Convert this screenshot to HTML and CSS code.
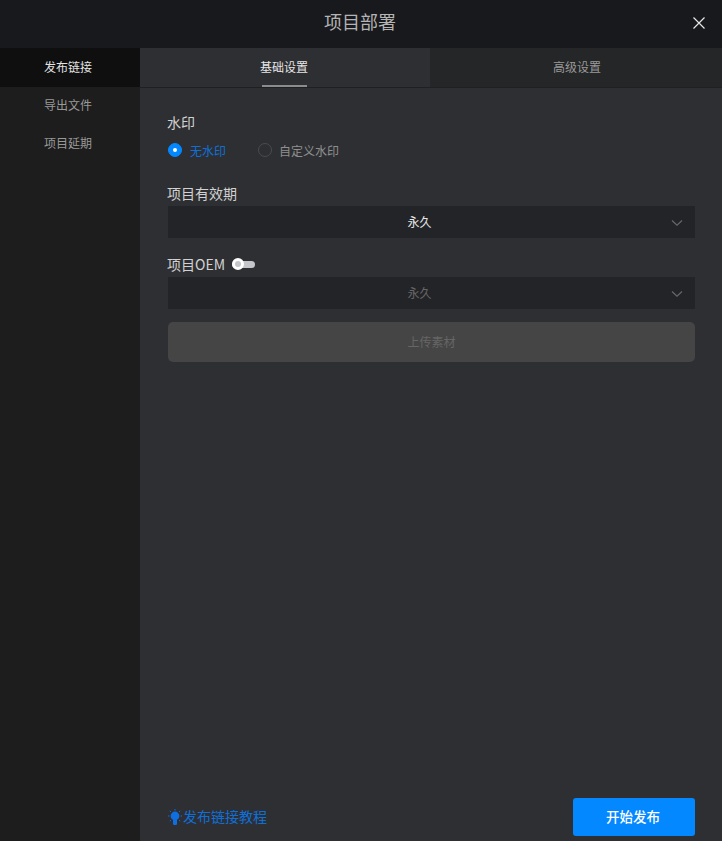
FILE: index.html
```html
<!DOCTYPE html>
<html lang="zh">
<head>
<meta charset="utf-8">
<title>项目部署</title>
<link rel="stylesheet" href="styles.css">
</head>
<body>
<div class="dialog">
  <header class="head">
    <h1 class="title">项目部署</h1>
    <button class="close" aria-label="关闭">
      <svg width="14" height="14" viewBox="0 0 14 14"><path d="M1.5 1.5 L12.5 12.5 M12.5 1.5 L1.5 12.5" stroke="#e6e6e6" stroke-width="1.2" fill="none"/></svg>
    </button>
  </header>
  <div class="body">
    <nav class="side">
      <a class="side-item active">发布链接</a>
      <a class="side-item">导出文件</a>
      <a class="side-item">项目延期</a>
    </nav>
    <main class="main">
      <div class="tabs">
        <div class="tab active"><span class="tab-label">基础设置</span></div>
        <div class="tab"><span class="tab-label">高级设置</span></div>
      </div>
      <div class="form">
        <div class="label label-first">水印</div>
        <div class="radios">
          <label class="radio on"><i class="dot"></i>无水印</label>
          <label class="radio"><i class="dot"></i>自定义水印</label>
        </div>
        <div class="label label-valid">项目有效期</div>
        <div class="select">
          <span>永久</span>
          <svg class="chev" width="12" height="8" viewBox="0 0 12 8"><path d="M1 1.5 L6 6.2 L11 1.5" stroke="#66686c" stroke-width="1.2" fill="none"/></svg>
        </div>
        <div class="label label-oem">项目OEM
          <span class="switch"><i class="knob"></i></span>
        </div>
        <div class="select disabled">
          <span>永久</span>
          <svg class="chev" width="12" height="8" viewBox="0 0 12 8"><path d="M1 1.5 L6 6.2 L11 1.5" stroke="#66686c" stroke-width="1.2" fill="none"/></svg>
        </div>
        <div class="upload">上传素材</div>
      </div>
      <footer class="foot">
        <a class="help">
          <svg width="14" height="17" viewBox="0 0 14 17"><circle cx="7" cy="7" r="4.4" fill="#0f6fe0"/><rect x="5" y="10" width="4" height="6" rx="1.2" fill="#0f6fe0"/><path d="M7 0v1.5M0 7h1.4M12.6 7H14M1.8 1.8l1.1 1.1M12.2 1.8l-1.1 1.1M1.8 12.2l1.1-1.1M12.2 12.2l-1.1-1.1" stroke="#0f6fe0" stroke-width="1" fill="none"/></svg>发布链接教程</a>
        <button class="publish">开始发布</button>
      </footer>
    </main>
  </div>
</div>
</body>
</html>
```

FILE: styles.css
```css
* { box-sizing: border-box; }
html, body { margin: 0; padding: 0; height: 100%; }
body {
  background: #2e2f33;
  font-family: "Noto Sans CJK SC", "Liberation Sans", sans-serif;
  overflow: hidden;
}
.dialog { width: 722px; height: 841px; display: flex; flex-direction: column; }
.head {
  height: 48px;
  flex: none;
  background: #18191d;
  display: flex;
  align-items: center;
  justify-content: center;
  position: relative;
}
.title { margin: 0 2px 0 0; font-size: 18px; font-weight: 400; color: #b4b4b4; line-height: 48px; transform: translateY(-3px); }
.close {
  position: absolute;
  right: 16px;
  top: 16px;
  width: 14px;
  height: 14px;
  padding: 0;
  border: 0;
  background: none;
  display: block;
}
.close svg { display: block; }
.body { flex: 1; display: flex; min-height: 0; }
.side { width: 140px; flex: none; background: #1d1d1d; display: flex; flex-direction: column; }
.side-item {
  height: 38px;
  padding-left: 44px;
  font-size: 12px;
  line-height: 35px;
  color: #999;
}
.side-item.active { height: 39px; line-height: 38px; background: #0f0f10; color: #e4e4e4; }
.main { flex: 1; display: flex; flex-direction: column; min-width: 0; }
.tabs { height: 40px; flex: none; display: flex; border-bottom: 1px solid #1f2023; }
.tab {
  flex: 1;
  display: flex;
  justify-content: center;
  padding-left: 2px;
  background: #252628;
}
.tab.active { flex: none; width: 290px; padding: 0 2px 0 0; background: #2e2f33; }
.tab-label {
  height: 39px;
  font-size: 12px;
  line-height: 37px;
  color: #999;
  position: relative;
}
.tab.active .tab-label { color: #e6e6e6; }
.tab.active .tab-label::after {
  content: "";
  position: absolute;
  left: 2px;
  right: 1px;
  bottom: 0;
  height: 2px;
  background: #8c8c8c;
}
.form { flex: 1; padding: 0 27px; display: flex; flex-direction: column; }
.label { font-size: 14px; font-weight: 400; line-height: 18px; color: #d2d2d2; display: flex; align-items: center; }
.label-first { margin-top: 25px; }
.label-valid { margin-top: 25px; margin-bottom: 1px; }
.label-oem { margin-top: 17px; }
.radios { display: flex; margin-top: 10px; height: 18px; }
.radio { display: flex; align-items: center; font-size: 12px; color: #8f8f8f; margin-right: 32px; }
.radio.on { color: #0f6fd8; margin-right: 31px; }
.dot {
  width: 14px;
  height: 14px;
  margin: 0 7px 0 1px;
  border-radius: 50%;
  border: 1px solid #4a4b4f;
  position: relative;
}
.radio.on .dot { margin-right: 8px; background: #0488ff; border-color: #0488ff; }
.radio.on .dot::after {
  content: "";
  position: absolute;
  left: 4px;
  top: 4px;
  width: 4px;
  height: 4px;
  border-radius: 50%;
  background: #fff;
}
.select {
  margin-top: 3px;
  height: 32px;
  margin-left: 1px;
  padding: 0 24px 2px 0;
  flex: none;
  background: #232428;
  display: flex;
  align-items: center;
  justify-content: center;
  font-size: 12px;
  color: #e6e6e6;
  position: relative;
}
.select.disabled { color: #666; margin-top: 4px; }
.chev { position: absolute; right: 12px; top: 13px; }
.switch {
  width: 23px;
  height: 7px;
  margin-left: 7px;
  border-radius: 4px;
  background: #c4c6cc;
  position: relative;
  display: inline-block;
}
.knob {
  position: absolute;
  left: 0;
  top: -3px;
  width: 12px;
  height: 12px;
  border-radius: 50%;
  background: #c4c6cc;
  border: 3px solid #fff;
}
.upload {
  margin: 13px 0 0 1px;
  height: 40px;
  flex: none;
  background: #454545;
  border-radius: 5px;
  color: #666;
  font-size: 12px;
  line-height: 40px;
  text-align: center;
}
.foot {
  height: 43px;
  flex: none;
  padding: 0 27px 5px 28px;
  display: flex;
  align-items: flex-start;
  justify-content: space-between;
}
.help {
  display: flex;
  align-items: center;
  height: 38px;
  padding-bottom: 2px;
  font-size: 14px;
  color: #0f6fd8;
}
.help svg { flex: none; margin-top: 2px; margin-right: 1px; }
.publish {
  width: 122px;
  height: 38px;
  padding: 0 2px 2px 0;
  border: 0;
  border-radius: 3px;
  background: #0488ff;
  color: #fff;
  font: 500 13.5px "Noto Sans CJK SC", sans-serif;
}
```
